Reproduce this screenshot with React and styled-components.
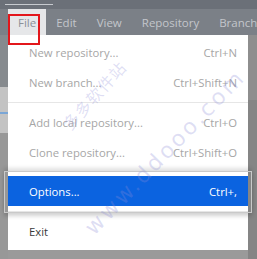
import React from "react";
import styled, { createGlobalStyle } from "styled-components";

const GlobalStyle = createGlobalStyle`
    html, body {
        margin: 0;
        padding: 0;
        background: #999999;
    }
    * {
        box-sizing: border-box;
    }
`;

const Page = styled.div`
    position: relative;
    width: 257px;
    height: 259px;
    overflow: hidden;
    display: flex;
    flex-direction: column;
    font-family: "Open Sans", "Noto Sans", sans-serif;
    background: #9a9a9a;
`;

const TitleStrip = styled.div`
    height: 9px;
    background: #6b7078;
    padding: 4px 0 0 5px;
`;

const TitleLine = styled.div`
    width: 48px;
    height: 1px;
    background: #c7cacf;
`;

const MenuBar = styled.div`
    height: 26px;
    display: flex;
    padding-left: 8px;
    background: #7b8087;
`;

const MenuTab = styled.div`
    padding: 0 10px;
    display: flex;
    align-items: center;
    font-size: 11.5px;
    color: ${(p) => (p.$open ? "#8c9098" : "#c3c6cb")};
    background: ${(p) => (p.$open ? "#e6e7e9" : "transparent")};
    white-space: nowrap;
`;

const Body = styled.div`
    flex: 1;
    display: flex;
`;

const LeftStrip = styled.div`
    width: 8px;
    display: flex;
    flex-direction: column;
`;

const Band = styled.div`
    height: ${(p) => p.$h}px;
    flex: ${(p) => (p.$h ? "none" : 1)};
    background: ${(p) => p.$bg};
`;

const RightStrip = styled.div`
    width: 9px;
    display: flex;
    flex-direction: column;
`;

const Menu = styled.div`
    width: 240px;
    align-self: flex-start;
    background: #ffffff;
    padding: 2px 0 4px;
    display: flex;
    flex-direction: column;
`;

const Item = styled.div`
    position: relative;
    height: 30px;
    display: flex;
    align-items: center;
    justify-content: space-between;
    padding: 0 11px 0 21px;
    font-size: 11.3px;
    color: ${(p) => (p.$active ? "#ffffff" : p.$dark ? "#3a3a3a" : "#a6a6a6")};
    background: ${(p) => (p.$active ? "#0b63e0" : "transparent")};

    &::before {
        content: "";
        display: ${(p) => (p.$active ? "block" : "none")};
        position: absolute;
        left: -4px;
        right: -4px;
        top: -5px;
        bottom: -7px;
        border: 1px solid #c9c9c9;
        box-shadow: 0 -3px 4px rgba(0, 0, 0, 0.12), 0 3px 4px rgba(0, 0, 0, 0.18);
        pointer-events: none;
    }
`;

const Shortcut = styled.span`
    white-space: nowrap;
`;

const Separator = styled.div`
    height: ${(p) => p.$h || 10}px;
    display: flex;
    align-items: center;

    &::after {
        content: "";
        flex: 1;
        height: 1px;
        background: #e6e6e6;
    }
`;

const Marker = styled.div`
    position: absolute;
    left: 8px;
    top: 14px;
    width: 32px;
    height: 31px;
    border: 2px solid #e3161b;
`;

const Watermark = styled.div`
    position: absolute;
    left: ${(p) => p.$x}px;
    top: ${(p) => p.$y}px;
    transform: translate(-50%, -50%) rotate(${(p) => p.$deg}deg);
    font-family: ${(p) => p.$font};
    font-size: ${(p) => p.$size}px;
    font-weight: 400;
    color: rgba(140, 140, 215, 0.28);
    white-space: nowrap;
    letter-spacing: ${(p) => p.$ls}px;
    pointer-events: none;
`;

const tabs = ["File", "Edit", "View", "Repository", "Branch"];

const App = () => {
    return (
        <Page>
            <GlobalStyle />
            <TitleStrip>
                <TitleLine />
            </TitleStrip>
            <MenuBar>
                {tabs.map((t, i) => (
                    <MenuTab key={t} $open={i === 0}>{t}</MenuTab>
                ))}
            </MenuBar>
            <Body>
                <LeftStrip>
                    <Band $h={52} $bg="#868a8e" />
                    <Band $h={25} $bg="#c3c3c3" />
                    <Band $h={2} $bg="#7aa6d6" />
                    <Band $h={19} $bg="#c3c3c3" />
                    <Band $bg="#989898" />
                </LeftStrip>
                <Menu>
                    <Item><span>New repository...</span><Shortcut>Ctrl+N</Shortcut></Item>
                    <Item><span>New branch...</span><Shortcut>Ctrl+Shift+N</Shortcut></Item>
                    <Separator />
                    <Item><span>Add local repository...</span><Shortcut>Ctrl+O</Shortcut></Item>
                    <Item><span>Clone repository...</span><Shortcut>Ctrl+Shift+O</Shortcut></Item>
                    <Separator $h={9} />
                    <Item $active><span>Options...</span><Shortcut>Ctrl+,</Shortcut></Item>
                    <Separator />
                    <Item $dark><span>Exit</span></Item>
                </Menu>
                <RightStrip>
                    <Band $h={65} $bg="#8e8e8e" />
                    <Band $bg="#858585" />
                </RightStrip>
            </Body>
            <Marker />
            <Watermark $x={94} $y={95} $deg={-48} $size={16} $ls={1} $font={'"Noto Sans CJK SC", sans-serif'}>
                多多软件站
            </Watermark>
            <Watermark $x={165} $y={152} $deg={-46} $size={22} $ls={3} $font={'"DejaVu Sans", sans-serif'}>
                www.ddooo.com
            </Watermark>
        </Page>
    );
};

export default App;
